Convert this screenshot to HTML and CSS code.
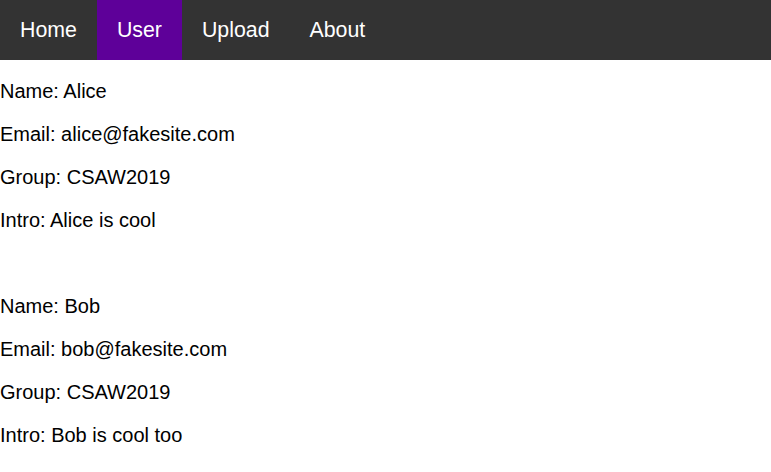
FILE: index.html
```html
<!DOCTYPE html>
<html>
<head>
<meta charset="utf-8">
<link rel="stylesheet" href="styles.css">
</head>
<body>
<nav class="topnav">
  <a class="nav-link" href="#">Home</a>
  <a class="nav-link active" href="#">User</a>
  <a class="nav-link" href="#">Upload</a>
  <a class="nav-link" href="#">About</a>
</nav>
<main class="content">
  <div class="user">
    <p>Name: Alice</p>
    <p>Email: alice@fakesite.com</p>
    <p>Group: CSAW2019</p>
    <p>Intro: Alice is cool</p>
  </div>
  <br>
  <div class="user">
    <p>Name: Bob</p>
    <p>Email: bob@fakesite.com</p>
    <p>Group: CSAW2019</p>
    <p>Intro: Bob is cool too</p>
  </div>
</main>
</body>
</html>
```
FILE: styles.css
```css
html, body {
  margin: 0;
  padding: 0;
  background: #ffffff;
}
body {
  font-family: "Liberation Sans", Arial, sans-serif;
  font-size: 20px;
  color: #000;
}
.topnav {
  display: flex;
  height: 60px;
  background: #333333;
}
.nav-link {
  display: flex;
  align-items: center;
  padding: 0 20px;
  color: #ffffff;
  text-decoration: none;
  font-size: 21.33px;
}
.nav-link.active {
  background: #5e0099;
}
.content p {
  margin: 20px 0;
  line-height: 23px;
}
```
